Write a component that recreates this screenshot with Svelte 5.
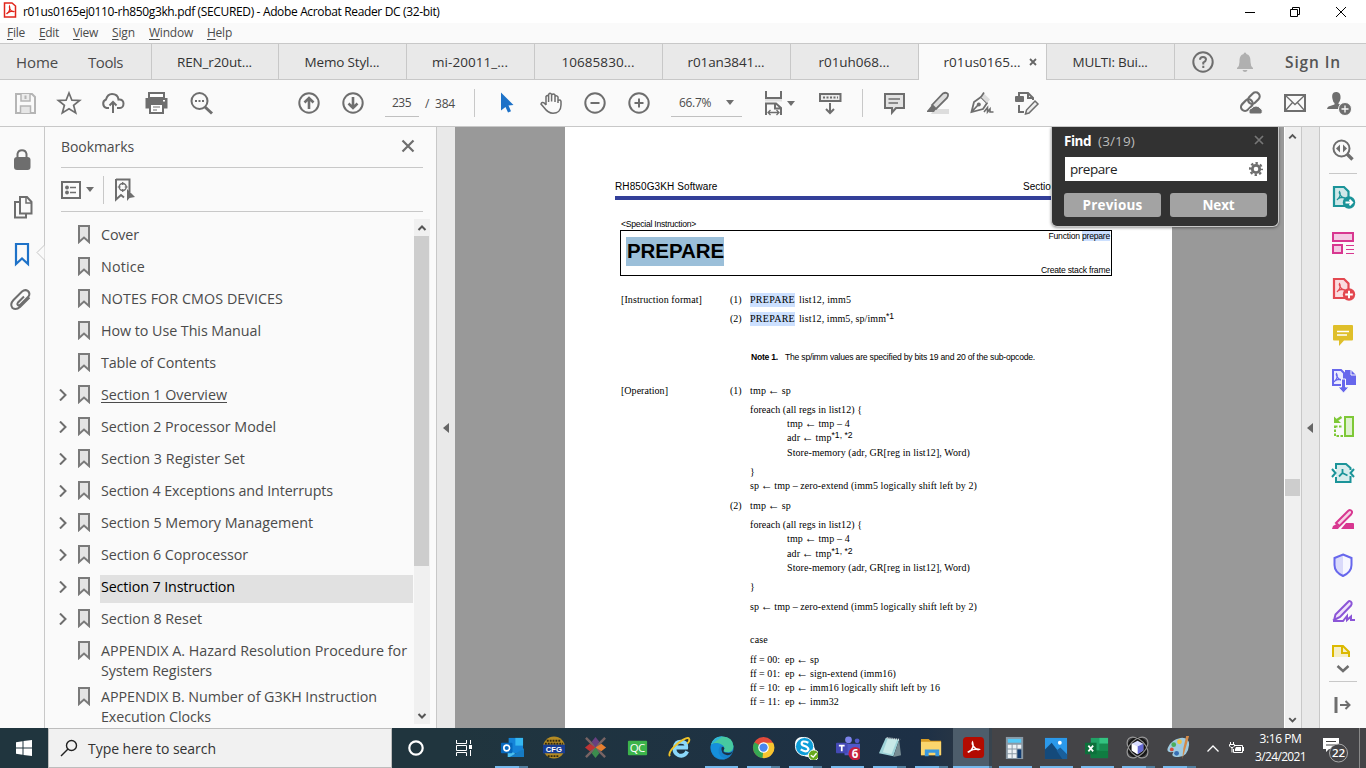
<script>
  // Adjusts letter spacing so a label fills its designed width.
  function fit(node, width) {
    const n = [...node.textContent].length;
    const natural = node.getBoundingClientRect().width;
    if (n > 0 && natural > 0) node.style.letterSpacing = (width - natural) / n + 'px';
  }

  const g = 'fill="none" stroke="#6e6e6e" stroke-width="2"';
  const g1 = 'fill="none" stroke="#6e6e6e"';
  const acro = (c) => `<path d="M8 16C12 13 11.500 9 10.500 7.500C9.500 9 13 15 16 14C14 12.500 9 14 8 16" fill="none" stroke="${c}" stroke-width="1.200"/>`;

  const icons = {
    save: '<path d="M3 3H19L22 6V22H3Z" fill="none" stroke="#b5b5b5" stroke-width="2"/><path d="M8 3V10H17V3" fill="#ececec" stroke="#b5b5b5" stroke-width="1.500"/><path d="M12.500 4.500V8" stroke="#b5b5b5" stroke-width="2"/><path d="M7.500 22V15H17.500V22" fill="#e6e6e6" stroke="#b5b5b5" stroke-width="1.500"/>',
    star: `<path d="M12 2L14.900 9.200L22.600 9.500L16.600 14.300L18.700 21.900L12 17.700L5.300 21.900L7.400 14.300L1.400 9.500L9.100 9.200Z" ${g1} stroke-width="1.700"/>`,
    cloud: `<path d="M8 17H5.500A4.500 4.500 0 0 1 5 8.500C6 5 8 3 11 3C14.500 3 17 5 17.500 8.500C21 8 22.500 10.500 22.500 12.500C22.500 15 21 17 19 17H16" ${g}/><path d="M12 22V11M8.500 14.500L12 11L15.500 14.500" ${g}/>`,
    print: '<g transform="translate(-1 -1)"><path d="M5 3H20V8H5Z" fill="#fff" stroke="#6e6e6e" stroke-width="2"/><path d="M1.500 8H23.500V18.500H1.500Z" fill="#6e6e6e"/><path d="M6 14H19V23H6Z" fill="#fff" stroke="#6e6e6e" stroke-width="2"/><path d="M9 17H16M9 20H13" stroke="#6e6e6e" stroke-width="1.200"/><rect x="19" y="10" width="2" height="1.500" fill="#fff"/></g>',
    searchdots: `<circle cx="10.500" cy="10" r="8" ${g}/><path d="M16 16L23 22.500" stroke="#6e6e6e" stroke-width="3"/><path d="M6 10H8M9.500 10H11.500M13 10H15" stroke="#6e6e6e" stroke-width="2"/>`,
    up: `<circle cx="12" cy="12" r="9.700" ${g}/><path d="M12 18V7M7.500 11.500L12 7L16.500 11.500" ${g1} stroke-width="2.600"/>`,
    down: `<circle cx="12" cy="12" r="9.700" ${g}/><path d="M12 6V17M7.500 12.500L12 17L16.500 12.500" ${g1} stroke-width="2.600"/>`,
    pointer: '<path d="M6 1.500V19.500L10.500 16L13 21.500L16 20.300L13.500 14.500L18.500 14Z" fill="#1e72c8"/>',
    hand: `<path d="M7 14V5.500Q8.500 3.500 9.600 5.500V11M9.600 10V3.500Q11.200 1.200 12.600 3.500V10.500M12.600 4Q14.500 2 16 4V11M16 5.500Q18 4 19 6V12M19 9.500Q21.500 8 22 10.500V14C22 19.500 18.500 22.200 14 22.200C9.500 22.200 7.500 20 5 16.500L2 13Q3 10.500 5.500 12.200L7 14" ${g1} stroke-width="1.500"/>`,
    minus: `<circle cx="12" cy="12" r="9.700" ${g}/><path d="M7.500 12H16.500" ${g}/>`,
    plus: `<circle cx="12" cy="12" r="9.700" ${g}/><path d="M7.500 12H16.500M12 7.500V16.500" ${g}/>`,
    fitw: `<rect x="3" y="8" width="17" height="2.500" fill="#e1e1e1"/><path d="M4 0V7H19V0M4 24V12.500H14L19 17V24M13 12.500V17.500H19" ${g}/><path d="M6 21.500H17M8.500 19L6 21.500L8.500 24M14.500 19L17 21.500L14.500 24" ${g1} stroke-width="1.300"/>`,
    keys: `<rect x="2" y="3" width="20.500" height="7" fill="#ececec" stroke="#6e6e6e" stroke-width="2"/><path d="M5 6.500H20" stroke="#6e6e6e" stroke-width="2" stroke-dasharray="2 1.500"/><path d="M12 12V22M8 18L12 22L16 18" ${g}/>`,
    comment: '<path d="M3 3H22V17H14L10 21.500V17H3Z" fill="#e3e3e3" stroke="#6e6e6e" stroke-width="2"/><path d="M6.500 8H18M6.500 12H16" stroke="#6e6e6e" stroke-width="1.300"/>',
    marker: '<path d="M8 18H23V23H5Z" fill="#ddd"/><path d="M6 14L17 2.500Q20 .800 22 3Q22.500 5 21 7L10 18Z" fill="#ddd" stroke="#6e6e6e" stroke-width="1.800"/><path d="M6 14L10 18L8 21H1V20Z" fill="#6e6e6e"/>',
    pen: `<path d="M1.500 21L4 11L11 6L17 12L13 18L1.500 21ZM1.500 21L8.500 13.500" ${g1} stroke-width="1.800"/><path d="M11 6L13.500 2L20 8.500L17 12" fill="#ddd"/><path d="M11 6L14 1.500" stroke="#6e6e6e" stroke-width="1.700"/><circle cx="8.800" cy="13.500" r="2" fill="#6e6e6e"/><path d="M14 21L17.500 16.500V21L20 18V21H23.500" ${g1} stroke-width="1.600"/>`,
    docedit: `<path d="M5 6V2H14L19 7V9M14 2V7H19M5 14V21H10" ${g}/><rect x="1" y="5" width="9" height="6" rx="1" fill="#6e6e6e"/><path d="M21 10L24 13L15 22L11.500 23L12.500 19Z" fill="#eee" stroke="#6e6e6e" stroke-width="1.500"/>`,
    link: `<g transform="rotate(-45 11 11)" ${g1} stroke-width="2.200"><rect x="0" y="7" width="13" height="8" rx="4"/><rect x="10" y="7" width="13" height="8" rx="4"/></g><path d="M11 23A3.500 3.500 0 0 1 13 17A5 5 0 0 1 21 17A3.500 3.500 0 0 1 22 23Z" fill="#6e6e6e" stroke="#fafafa"/>`,
    mail: `<rect x="2" y="4" width="20" height="16" ${g}/><path d="M2.500 4.500L12 13.500L21.500 4.500M2.500 19.500L9.500 11.500M21.500 19.500L14.500 11.500" ${g1} stroke-width="1.300"/>`,
    person: '<path d="M9 1C5.500 1 4.700 4 5.500 8Q6 11 7.500 12V13.500L1.500 15.500Q0 16.500 0 18H16L14 14L11.500 13V12Q13 10.500 13.500 7.500C14 3 12 1 9 1Z" fill="#6e6e6e"/><circle cx="18" cy="18" r="6.500" fill="#6e6e6e" stroke="#fafafa"/><path d="M14.500 18H21.500M18 14.500V21.500" stroke="#fafafa" stroke-width="1.300"/>',
    help: `<circle cx="12" cy="12" r="9.700" ${g}/><path d="M9 9.800Q9 7 12 7Q15 7 15 9.500Q15 11 12.300 12.500V14.500M12.300 15.800V18" ${g}/>`,
    bell: '<path d="M12 2.500C13 2.500 13.300 3.500 13.300 4C17 5 17.500 8 17.500 12Q17.500 16 20 18V19H4V18Q6.500 16 6.500 12C6.500 8 7 5 10.700 4C10.700 3.500 11 2.500 12 2.500ZM9.500 20H14.500Q14 22 12 22Q10 22 9.500 20Z" fill="#b0b0b0"/>',
    lock: `<path d="M7.500 11V6A4.600 4.600 0 0 1 16.500 6V11" ${g}/><rect x="4" y="9" width="16.500" height="13" rx="3" fill="#6e6e6e"/>`,
    pages: `<path d="M5 7V22.500H16V19" ${g}/><path d="M10 2H17L21.500 7V18.500H10Z" fill="#fafafa" stroke="#6e6e6e" stroke-width="2"/><path d="M16 2V8H21.500" ${g1} stroke-width="1.500"/><path d="M4 7H9" ${g}/>`,
    mark: '<path d="M6 2H18V22L12 16.500L6 22Z" fill="none" stroke="#1e72c8" stroke-width="2.200"/>',
    clip: `<path d="M15 8.500L9 14.500Q7.500 16.500 9.500 17.500Q10.500 17.500 11.500 16.500L19.500 8.500Q21.500 5.500 19 3Q16 1 13 3.500L4.500 12Q.500 16.500 3.500 20Q7 22.500 11 19L20.500 9.500" ${g} transform="translate(-1 -1)"/>`,
    rsearch: `<circle cx="10.500" cy="10.500" r="8" ${g}/><path d="M16 16L21.500 21.500" stroke="#6e6e6e" stroke-width="3.400"/><path d="M9 6.500V14.500L5 10.500ZM12 6.500V14.500L16 10.500Z" fill="#6e6e6e"/>`,
    exp: `<path d="M3 2H13L17.500 6.500V21H3Z" fill="#cfe8e9" stroke="#1b9499" stroke-width="2.200"/>${acro('#1b9499').replace('<path', '<path transform="translate(-2 -1)"')}<circle cx="18" cy="17.500" r="6.200" fill="#1b9499"/><path d="M14.500 17.500H21M18.500 14.700L21.300 17.500L18.500 20.300" fill="none" stroke="#fff" stroke-width="1.800"/>`,
    org: '<g fill="#f4cbe4" stroke="#d83790" stroke-width="2"><rect x="2" y="2" width="20" height="8"/><rect x="2" y="14" width="9" height="8"/></g><path d="M15 14.500H23M15 18.500H23M15 22.500H23" stroke="#d83790" stroke-width="1"/>',
    create: `<path d="M3 2H13L17.500 6.500V21H3Z" fill="#fbdcdf" stroke="#e34850" stroke-width="2.200"/>${acro('#e34850').replace('<path', '<path transform="translate(-2 -1)"')}<circle cx="18" cy="17.500" r="6.200" fill="#e34850"/><path d="M14.200 17.500H21.800M18 13.700V21.300" stroke="#fff" stroke-width="2"/>`,
    note: '<path d="M3 2H21Q22 2 22 3V16.500Q22 17.500 21 17.500H13L8 23V17.500H3Q2 17.500 2 16.500V3Q2 2 3 2Z" fill="#dfbf2a"/><path d="M6 8.500H18M6 12H16" stroke="#fff" stroke-width="1.500"/>',
    combine: `<path d="M14 1H20L25 6V16H14Z" fill="#6767ec"/><path d="M20 1V6H25" stroke="#fafafa" fill="none"/><path d="M11 16H2V1H10L13 4V12" fill="#ececff" stroke="#6767ec" stroke-width="2"/>${acro('#6767ec').replace('<path', '<path transform="translate(-5 -3)"')}<path d="M10.500 10H14.500V18H18L12.500 24L7 18H10.500Z" fill="#6767ec" stroke="#fafafa" stroke-width="1"/>`,
    compare: '<rect x="14" y="2" width="8" height="19" fill="#dff2cf" stroke="#7ec837" stroke-width="2"/><path d="M4 10.500V21H12M4 11.500H11.500" fill="none" stroke="#7ec837" stroke-width="2" stroke-dasharray="2.500 1.500"/><path d="M10.500 2L6 5" stroke="#7ec837" stroke-width="2.500"/><path d="M3 1.500V8H10Z" fill="#7ec837"/>',
    compress: `<path d="M5 3H15L19.500 7V21H5Z" fill="#d9eded"/><path d="M5 8V3H15L19.500 7V9M5 16V21H19.500V15M1 8L4.500 12L1 16M23 8L19.500 12L23 16" fill="none" stroke="#1b9499" stroke-width="2"/><path d="M11.500 8V12L8 15.500M11.500 12L16.500 14.500" fill="none" stroke="#1b9499" stroke-width="1.800"/>`,
    redact: '<path d="M10 22L15 16H22Q23 16 23 17V22ZM1 22L2 19L5.500 17L8.500 20L7 22Z" fill="#d83790"/><path d="M5 16L17 4Q19.500 2 21 4.500Q21.500 6 20 7.500L8.500 19Z" fill="#f6d3e6" stroke="#d83790" stroke-width="2"/>',
    shield: '<path d="M12 1.500L20.500 5V12Q20.500 19 12 23Q3.500 19 3.500 12V5Z" fill="#f7f7ff"/><path d="M12 2V22.500Q3.500 19 3.500 12V5Z" fill="#dadafa"/><path d="M12 1.500L20.500 5V12Q20.500 19 12 23Q3.500 19 3.500 12V5Z" fill="none" stroke="#6767ec" stroke-width="2"/>',
    sign: '<path d="M3 21.500L4.500 15.500L17 3Q19 1 20.500 3.500Q21 5 20 6.500L9 18L2 21.500" fill="#f0e2fb" stroke="#8b55d7" stroke-width="2"/><path d="M2 22H12L16 17V21L20 17.500V21H24" fill="none" stroke="#8b55d7" stroke-width="2"/>',
    more: '<path d="M2 14V2H12L18 8V14" fill="#f6efc5" stroke="#dcb900" stroke-width="2"/><path d="M11 2V9H18" fill="none" stroke="#dcb900" stroke-width="2"/>',
    open: `<path d="M5 4V20" stroke="#6e6e6e" stroke-width="3"/><path d="M9 12H18M14.500 8L18.500 12L14.500 16" ${g}/>`
  };

  const tabs = [['REN_r20ut...', 75], ['Memo Styl...', 75], ['mi-20011_...', 76], ['10685830...', 73], ['r01an3841...', 77], ['r01uh068...', 71], ['r01us0165...', 77], ['MULTI: Bui...', 75]];
  const menus = [['File', 18], ['Edit', 20], ['View', 25], ['Sign', 23], ['Window', 44], ['Help', 25]];
  const bookmarks = [
    { t: 'Cover', w: 38 }, { t: 'Notice', w: 44 }, { t: 'NOTES FOR CMOS DEVICES', w: 182 },
    { t: 'How to Use This Manual', w: 160 }, { t: 'Table of Contents', w: 115 },
    { t: 'Section 1 Overview', w: 126, c: 1, u: 1 }, { t: 'Section 2 Processor Model', w: 175, c: 1 },
    { t: 'Section 3 Register Set', w: 144, c: 1 }, { t: 'Section 4 Exceptions and Interrupts', w: 232, c: 1 },
    { t: 'Section 5 Memory Management', w: 212, c: 1 }, { t: 'Section 6 Coprocessor', w: 147, c: 1 },
    { t: 'Section 7 Instruction', w: 134, c: 1, sel: 1 }, { t: 'Section 8 Reset', w: 101, c: 1 },
    { t: 'APPENDIX A. Hazard Resolution Procedure for', w: 306, t2: 'System Registers', w2: 111 },
    { t: 'APPENDIX B. Number of G3KH Instruction', w: 276, t2: 'Execution Clocks', w2: 110 }
  ];
  // gap: space above the line, n: item number, i: indented
  const lines = [
    { gap: 22, s: '[Operation]', sw: 47, n: '(1)', t: 'tmp ← sp', w: 41 },
    { gap: 5, t: 'foreach (all regs in list12) {', w: 112 },
    { gap: 0, i: 1, t: 'tmp ← tmp – 4', w: 63 },
    { gap: 0, i: 1, t: 'adr ← tmp', w: 44.5, sup: '*1, *2' },
    { gap: 1, i: 1, t: 'Store-memory (adr, GR[reg in list12], Word)', w: 183 },
    { gap: 5, t: '}', w: 5 },
    { gap: 0, t: 'sp ← tmp – zero-extend (imm5 logically shift left by 2)', w: 227 },
    { gap: 6, n: '(2)', t: 'tmp ← sp', w: 41 },
    { gap: 5, t: 'foreach (all regs in list12) {', w: 112 },
    { gap: 0, i: 1, t: 'tmp ← tmp – 4', w: 63 },
    { gap: 1, i: 1, t: 'adr ← tmp', w: 44.5, sup: '*1, *2' },
    { gap: 0, i: 1, t: 'Store-memory (adr, GR[reg in list12], Word)', w: 183 },
    { gap: 5, t: '}', w: 5 },
    { gap: 6, t: 'sp ← tmp – zero-extend (imm5 logically shift left by 2)', w: 227 },
    { gap: 19, t: 'case', w: 18 },
    { gap: 6, f: 'ff = 00:', t: 'ep ← sp', w: 34 },
    { gap: 0, f: 'ff = 01:', t: 'ep ← sign-extend (imm16)', w: 111 },
    { gap: 0, f: 'ff = 10:', t: 'ep ← imm16 logically shift left by 16', w: 155 },
    { gap: 0, f: 'ff = 11:', t: 'ep ← imm32', w: 54 }
  ];
  const rail = ['exp', 'org', 'create', 'note', 'combine', 'compare', 'compress', 'redact', 'shield', 'sign'];

  const apps = [
    { r: 1, stack: 1, s: '<path d="M9 2H24V18H9Z" fill="#1584d8"/><path d="M16 2H24V10H16Z" fill="#35b8f1"/><path d="M8 14L17 19L25 13V22H8Z" fill="#4bc0ef"/><path d="M10 22L25 13V22Z" fill="#167bc3"/><rect x="1" y="7" width="12" height="11" rx="1" fill="#0668bd"/><circle cx="7" cy="12.500" r="3" fill="none" stroke="#fff" stroke-width="1.700"/>' },
    { s: '<circle cx="12.500" cy="12" r="11.500" fill="#b48b24"/><path d="M5 5H20M3 8H22M6 21H18" stroke="#30280d" stroke-width="2" stroke-dasharray="2 1"/><path d="M1 9H24V18H1Z" fill="#173d94"/><text x="4" y="16.500" font-size="8" font-family="Liberation Sans" font-weight="bold" fill="#fff">CFG</text>' },
    { s: '<path d="M2 2L22 22M22 2L2 22" stroke="#786464" stroke-width="2.500"/><path d="M12 12L8 6L12 1L16 6Z" fill="#674080"/><path d="M12 12L18 8L23 12L18 16Z" fill="#e67e30"/><path d="M12 12L16 18L12 23L8 18Z" fill="#3b8c4d"/><path d="M12 12L6 16L1 12L6 8Z" fill="#bd3435"/>' },
    { s: '<rect x="2" y="5" width="20" height="15" rx="1" fill="#3cb44b"/><text x="4" y="17" font-size="12" textLength="16" font-family="Open Sans" fill="#fff">QC</text>' },
    { s: '<path d="M20 16Q17 22 11 20Q6 18 7 12Q8 6 13 6Q20 6 19 12H8" fill="none" stroke="#8ad8fa" stroke-width="4"/><path d="M2 21Q-1 17 11 7Q21 0 22 3Q23 5 20 8" fill="none" stroke="#efc329" stroke-width="2"/>' },
    { r: 1, s: '<circle cx="12.500" cy="12.500" r="12" fill="#1683ce"/><path d="M1 9Q4 0 13 .500Q24 1 24.500 11Q24 17 18 17Q13 17 15 13Q15 9 9 8Q4 7 1 9Z" fill="#47c9a0"/><path d="M1 9Q4 0 13 .500Q8 4 1 9Z" fill="#2fb4d8"/><path d="M1 9Q0 15 4 20Q9 25 16 24Q8 21 9 14Q10 9 13 10Q9 5 1 9Z" fill="#1590dc"/><path d="M15 13Q12 17.500 18 17.500Q22 18 24 15.500Q22 20 18 20Q11 19 12 12Q14 10 15 13Z" fill="#1c3148"/>' },
    { r: 1, stack: 1, s: '<circle cx="12" cy="12" r="11" fill="#e24a3b"/><path d="M12 12L2.500 6.500A11 11 0 0 0 12 23Z" fill="#36a853"/><path d="M12 12V7H22A11 11 0 0 1 11 23Z" fill="#f7c52f"/><circle cx="12" cy="12" r="5.500" fill="#fff"/><circle cx="12" cy="12" r="4.300" fill="#4a87ee"/>' },
    { r: 1, stack: 1, s: '<circle cx="8" cy="8" r="7" fill="#fff"/><circle cx="15" cy="15" r="7" fill="#fff"/><circle cx="11" cy="11" r="9.500" fill="#0e9ed9" stroke="#fff"/><path d="M15 7Q8 4 8 8C8 11 15 10 15 14Q13 18 7 14" fill="none" stroke="#fff" stroke-width="2.300"/><circle cx="20.500" cy="20" r="5.500" fill="#68a91d" stroke="#fff"/><path d="M17.500 20L20 22L23.500 18" fill="none" stroke="#fff" stroke-width="1.500"/>' },
    { r: 1, s: '<circle cx="13" cy="4" r="3.500" fill="#7b83eb"/><circle cx="22" cy="5" r="2.500" fill="#5059c9"/><path d="M8 8H25V15Q24 20 18 20H9Z" fill="#5059c9"/><rect x="0" y="7" width="12" height="11" rx="1" fill="#4449b6"/><path d="M3 10H9M6 10V16" stroke="#fff" stroke-width="1.800"/><circle cx="20" cy="18.500" r="7" fill="#c4213e"/><text x="16.500" y="23" font-size="12" font-family="Open Sans" font-weight="bold" fill="#fff">6</text>' },
    { r: 1, stack: 1, s: '<path d="M8 2L22 4L16 21L1 18Z" fill="#9ed3d8"/><path d="M10 3L20 4L14 19L5 17Z" fill="#c7e9e8"/><path d="M22 4L24 20L16 22Z" fill="#778c93"/><path d="M9 2L23 4" stroke="#dce5e5" stroke-width="2" stroke-dasharray="1 1"/>' },
    { r: 1, stack: 1, s: '<path d="M1 3H9L11 5H22V20H1Z" fill="#d99c23"/><path d="M1 6H22V20H1Z" fill="#fbd66d"/><path d="M5 21V14H20V21H16V17.500H9V21Z" fill="#3998df"/>' },
    { r: 1, act: 1, stack: 1, s: '<rect x="1" y="1" width="22" height="22" rx="4" fill="#b30b00"/><path d="M6 17C12 15 12 9 11 6.500C9.500 9 15 15.500 18 14C15 12.500 8 15 6 17" fill="none" stroke="#fff" stroke-width="1.500"/>' },
    { r: 1, s: '<path d="M3 1H21V24H3Z" fill="#8a99a5"/><path d="M5 3H19V7H5Z" fill="#55c9f6"/><g fill="#edf2f5"><path d="M5 9H9V13H5ZM10 9H14V13H10ZM15 9H19V13H15ZM5 14H9V18H5ZM10 14H14V18H10ZM5 19H9V23H5ZM10 19H14V23H10Z"/></g><path d="M15 14H19V23H15Z" fill="#123c70"/>' },
    { r: 1, s: '<path d="M1 2H24V24H1Z" fill="#2b99ea"/><path d="M1 14L8 7L21 24H1Z" fill="#144a7b"/><path d="M13 15L17 12L24 19V24H19Z" fill="#1a5f9b"/><circle cx="16.500" cy="7" r="2" fill="#fff"/>' },
    { r: 1, s: '<path d="M6 2H24V23H6Z" fill="#21a366"/><path d="M15 2H24V8H15Z" fill="#33c481"/><path d="M6 15H24V23H6Z" fill="#107c41"/><path d="M15 8H24V15H15Z" fill="#178c50"/><rect x="0" y="7" width="12" height="12" fill="#0d703b"/><path d="M3.500 10L8.500 16M8.500 10L3.500 16" stroke="#fff" stroke-width="1.800"/>' },
    { r: 1, stack: 1, s: '<circle cx="12" cy="12" r="11" fill="#171717"/><g fill="none" stroke="#999" stroke-width="1.200"><ellipse cx="12" cy="12" rx="13" ry="8" transform="rotate(45 12 12)"/><ellipse cx="12" cy="12" rx="13" ry="8" transform="rotate(-45 12 12)"/></g><path d="M12 5L18 8V15L12 19L6 15V8Z" fill="#d9dcff"/><path d="M12 11L18 8V15L12 19Z" fill="#6568d4"/><path d="M12 11L6 8V15L12 19Z" fill="#fff"/>' },
    { r: 1, stack: 1, s: '<path d="M14 2Q23 1 23 9Q22 21 12 22Q4 22 6 18Q8 16 4 17Q-1 17 1 12Q4 4 14 2Z" fill="#9fcbe1"/><circle cx="7" cy="9" r="2.500" fill="#4cae5b"/><circle cx="5" cy="14" r="2" fill="#d84d3d"/><circle cx="13" cy="6" r="2.500" fill="#efc343"/><circle cx="10" cy="18" r="2.500" fill="#376eb3"/><path d="M23 0L19 14L16 24L17 13L20 0Z" fill="#d38a48"/>' }
  ];
</script>

{#snippet icon(name)}
  <svg class="ic" viewBox="0 0 24 24">{@html icons[name]}</svg>
{/snippet}

<div class="app">
  <header class="title">
    <svg width="14" height="16" viewBox="0 0 14 16"><path d="M1.500 1H9L12.500 4V15H1.500Z" fill="#fff" stroke="#e1251b" stroke-width="1.500" /><path d="M3.500 12C7 10 7 6 6.500 4.500C6 6 8 10 10.500 9.500C9 8.500 5 10 3.500 12" fill="none" stroke="#e1251b" stroke-width="1.300" /></svg>
    <span class="cap"><span use:fit={416.5}>r01us0165ej0110-rh850g3kh.pdf (SECURED) - Adobe Acrobat Reader DC (32-bit)</span></span>
    <svg class="win" width="110" height="14" viewBox="0 0 110 14" fill="none" stroke="#000"><path d="M1 7.500H11M46.500 4.500H53.500V11.500H46.500ZM48.500 4V2.500H55.500V9.500H54M92 2L102 12M102 2L92 12" /></svg>
  </header>
  <nav class="menu">
    {#each menus as [m, w]}<span class="mi" style:width="{w}px"><span use:fit={w}><u>{m[0]}</u>{m.slice(1)}</span></span>{/each}
  </nav>
  <div class="tabs">
    <div class="home"><span use:fit={42}>Home</span><span use:fit={35}>Tools</span></div>
    {#each tabs as [t, w], k}
      <div class="tab" class:first={k === 0} class:on={k === 6}><span use:fit={w}>{t}</span>
        {#if k === 6}<svg class="tx" width="8" height="8" viewBox="0 0 8 8"><path d="M1 1L7 7M7 1L1 7" stroke="#666" stroke-width="1.800" /></svg>{/if}
      </div>
    {/each}
    <div class="acct">{@render icon('help')}{@render icon('bell')}<b use:fit={56}>Sign In</b></div>
  </div>
  <div class="tools">
    <div class="grp g1">{#each ['save', 'star', 'cloud', 'print', 'searchdots'] as n}{@render icon(n)}{/each}</div>
    <div class="grp g2">{@render icon('up')}{@render icon('down')}</div>
    <div class="box pg"><span use:fit={19}>235</span></div>
    <div class="of"><span use:fit={30}>/&nbsp; 384</span></div>
    <i class="sep s1"></i>
    <div class="grp g3">{#each ['pointer', 'hand', 'minus', 'plus'] as n}{@render icon(n)}{/each}</div>
    <div class="box zm"><span use:fit={32}>66.7%</span><i class="tri"></i></div>
    <div class="grp g4">{@render icon('fitw')}<i class="tri"></i></div>
    <div class="grp g5">{@render icon('keys')}</div>
    <i class="sep s2"></i>
    <div class="grp g6">{#each ['comment', 'marker', 'pen', 'docedit'] as n}{@render icon(n)}{/each}</div>
    <div class="grp g7">{#each ['link', 'mail', 'person'] as n}{@render icon(n)}{/each}</div>
  </div>

  <main>
    <aside class="left">
      {#each ['lock', 'pages', 'mark', 'clip'] as n}{@render icon(n)}{/each}
      <svg class="notch" width="9" height="15" viewBox="0 0 9 15"><path d="M8.500 0L1 7.500L8.500 15" fill="#fafafa" stroke="#c6c6c6" /></svg>
    </aside>
    <section class="panel">
      <div class="ph"><span use:fit={73}>Bookmarks</span><svg width="14" height="14" viewBox="0 0 14 14"><path d="M1.500 1.500L12.500 12.500M12.500 1.500L1.500 12.500" stroke="#6e6e6e" stroke-width="2.200" /></svg></div>
      <div class="pt">
        <svg width="20" height="18" viewBox="0 0 20 18"><path d="M1 1H19V17H1Z" fill="none" stroke="#6e6e6e" stroke-width="2" /><path d="M9 6.500H15M9 11.500H15" stroke="#6e6e6e" stroke-width="1.700" /><circle cx="6" cy="6.500" r="1.900" fill="#6e6e6e" /><circle cx="6" cy="11.500" r="1.900" fill="#6e6e6e" /></svg>
        <i class="tri"></i><i class="sep"></i>
        <svg width="22" height="24" viewBox="0 0 22 24"><path d="M2 1.500H15.500V14M2 1V21.500L7 17L10 19.500" fill="none" stroke="#6e6e6e" stroke-width="2" /><circle cx="8.700" cy="9" r="3.500" fill="none" stroke="#6e6e6e" stroke-width="1.400" /><path d="M8.700 4V7M8.700 11V14M3.700 9H6.700M10.700 9H13.700" stroke="#6e6e6e" stroke-width="1.200" /><path d="M13 11V23L15.500 20L21 19Z" fill="#6e6e6e" /></svg>
      </div>
      <div class="pl">
        <div class="list">
          {#each bookmarks as b}
            <div class="bm" class:two={b.t2}>
              <svg class="chev" width="10" height="12" viewBox="0 0 10 12">{#if b.c}<path d="M2 .500L7.500 6L2 11.500" fill="none" stroke="#6e6e6e" stroke-width="2" />{/if}</svg>
              <svg class="bi" width="12" height="19" viewBox="0 0 12 19"><path d="M1 1H11V17L6 12.500L1 17Z" fill="#e4e4e4" stroke="#7a7a7a" stroke-width="2" /></svg>
              <div class="bt" class:sel={b.sel} class:un={b.u}><span use:fit={b.w}>{b.t}</span>{#if b.t2}<br /><span use:fit={b.w2}>{b.t2}</span>{/if}</div>
            </div>
          {/each}
        </div>
        <div class="sb sl">
          <svg width="16" height="17" viewBox="0 0 16 17"><path d="M4.500 11L8 7.500L11.500 11" fill="none" stroke="#555" stroke-width="2" /></svg>
          <i></i>
          <svg class="end" width="16" height="17" viewBox="0 0 16 17"><path d="M4.500 7L8 10.500L11.500 7" fill="none" stroke="#555" stroke-width="2" /></svg>
        </div>
      </div>
    </section>
    <div class="strip"><i></i></div>
    <div class="canvas">
      <article class="page">
        <div class="rh"><span use:fit={102.5}>RH850G3KH Software</span><span class="sec">Section 7 Instruction</span></div>
        <div class="si"><span use:fit={75}>&lt;Special Instruction&gt;</span></div>
        <div class="frame">
          <h1><span use:fit={97}>PREPARE</span></h1>
          <div class="fr"><span><span use:fit={33.5}>Function&nbsp;</span><mark use:fit={28}>prepare</mark></span><span use:fit={69}>Create stack frame</span></div>
        </div>
        <div class="ln f1"><span class="side"><span use:fit={81}>[Instruction format]</span></span><span class="no">(1)</span><mark use:fit={45}>PREPARE</mark><span class="arg"><span use:fit={52}>list12, imm5</span></span></div>
        <div class="ln f2"><span class="side"></span><span class="no">(2)</span><mark use:fit={45}>PREPARE</mark><span class="arg"><span use:fit={87}>list12, imm5, sp/imm</span></span><sup>*1</sup></div>
        <div class="nt"><b use:fit={27}>Note 1.</b><span use:fit={250}>The sp/imm values are specified by bits 19 and 20 of the sub-opcode.</span></div>
        {#each lines as l}
          <div class="ln" style:margin-top="{l.gap}px">
            <span class="side">{#if l.s}<span use:fit={l.sw}>{l.s}</span>{/if}</span><span class="no">{l.n ?? ''}</span>{#if l.i}<span class="ind"></span>{/if}{#if l.f}<span class="ff"><span use:fit={30}>{l.f}</span></span>{/if}<span use:fit={l.w}>{#each l.t.split('←') as p, k}{#if k}<em>←</em>{/if}{p}{/each}</span>{#if l.sup}<sup>{l.sup}</sup>{/if}
          </div>
        {/each}
      </article>
      <div class="find">
        <div class="fh"><span><b use:fit={27}>Find</b><span class="cnt" use:fit={37}>(3/19)</span></span><svg width="10" height="10" viewBox="0 0 10 10"><path d="M1 1L9 9M9 1L1 9" stroke="#777" stroke-width="1.700" /></svg></div>
        <div class="fi"><span use:fit={47}>prepare</span><svg width="14" height="14" viewBox="0 0 14 14"><circle cx="7" cy="7" r="3.700" fill="none" stroke="#6e6e6e" stroke-width="2.800" /><circle cx="7" cy="7" r="5.900" fill="none" stroke="#6e6e6e" stroke-width="2.200" stroke-dasharray="2.400 2.230" stroke-dashoffset="1.200" /></svg></div>
        <div class="fb"><b><span use:fit={60}>Previous</span></b><b><span use:fit={32}>Next</span></b></div>
      </div>
    </div>
    <div class="sb sr">
      <svg width="15" height="17" viewBox="0 0 16 17"><path d="M4.500 11.500L8 8L11.500 11.500" fill="none" stroke="#555" stroke-width="2" /></svg>
      <i></i>
      <svg class="end" width="15" height="17" viewBox="0 0 16 17"><path d="M4.500 7L8 10.500L11.500 7" fill="none" stroke="#555" stroke-width="2" /></svg>
    </div>
    <div class="strip r"><i></i></div>
    <aside class="right">
      {@render icon('rsearch')}<hr />
      <div class="rl">{#each rail as n}{@render icon(n)}{/each}</div>
      <svg class="half" width="24" height="13" viewBox="0 0 24 13">{@html icons.more}</svg>
      <svg class="dn" width="14" height="8" viewBox="0 0 14 8"><path d="M1.500 1L7 6L12.500 1" fill="none" stroke="#6e6e6e" stroke-width="2.500" /></svg>
      <hr />{@render icon('open')}
    </aside>
  </main>

  <footer>
    <div class="start"><svg width="16" height="16" viewBox="0 0 16 16"><path d="M0 2.300L6.500 1.300V7.500H0ZM7.500 1.100L16 0V7.500H7.500ZM0 8.500H6.500V14.700L0 13.700ZM7.500 8.500H16V16L7.500 14.900Z" fill="#fff" /></svg></div>
    <div class="search"><svg width="18" height="18" viewBox="0 0 18 18"><circle cx="11.500" cy="6.500" r="5" fill="none" stroke="#222" stroke-width="1.400" /><path d="M8 10L1 17" stroke="#222" stroke-width="1.400" /></svg><span use:fit={128}>Type here to search</span></div>
    <div class="cort"><svg width="16" height="16" viewBox="0 0 16 16"><circle cx="8" cy="8" r="6.700" fill="none" stroke="#fff" stroke-width="2.200" /></svg></div>
    <div class="tv"><svg width="17" height="16" viewBox="0 0 17 16" fill="none" stroke="#fff"><path d="M.500 0V3.500H10.500V0M.500 16V12.500H10.500V16M.500 5.500H10.500V10.500H.500ZM14.500 0V4M14.500 10V16" /><path d="M13 5H16V9H13Z" fill="#fff" stroke="none" /></svg></div>
    <div class="apps">
      {#each apps as a, k}<div class="app-i" class:narrow={k > 11} class:act={a.act}><svg width="24" height="24" viewBox="0 0 25 25">{@html a.s}</svg>{#if a.r}<i class:stack={a.stack}></i>{/if}</div>{/each}
    </div>
    <div class="tray">
      <svg class="t1" width="12" height="7" viewBox="0 0 12 7"><path d="M.500 6.500L6 1L11.500 6.500" fill="none" stroke="#fff" stroke-width="1.300" /></svg>
      <svg class="t2" width="16" height="12" viewBox="0 0 16 12" fill="none" stroke="#fff"><path d="M6 3.500H13.500V10.500H4.500V7M14.500 5V9M1.500 0V2M4.500 0V2M.500 2.500H5.500V4L4 5.500H2L.500 4ZM3 6V10.500" /><path d="M7 5H12V9H6V7Z" fill="#fff" stroke="none" /></svg>
      <div class="clock"><span use:fit={42}>3:16 PM</span><span use:fit={51}>3/24/2021</span></div>
      <svg class="t3" width="28" height="26" viewBox="0 0 28 26"><path d="M1 1H17V12H7L4 15V12H1Z" fill="#fff" /><path d="M4 4.500H14M4 8H14" stroke="#444" /><circle cx="16.500" cy="16" r="9" fill="#444447" stroke="#aaa" /><text x="10" y="20" font-size="11.500" textLength="13" font-family="Open Sans" font-weight="600" fill="#fff">22</text></svg>
      <i class="edge"></i>
    </div>
  </footer>
</div>

<style>
  :global(body) { margin: 0; }
  .app { width: 1366px; height: 768px; overflow: hidden; display: flex; flex-direction: column; font-family: "Open Sans", sans-serif; color: #4b4b4b; background: #fafafa; white-space: nowrap; }
  .app * { box-sizing: border-box; }
  .app :global(span) { display: inline-block; }
  .ic { width: 24px; height: 24px; flex: none; overflow: visible; display: block; }
  svg { flex: none; display: block; }
  i { display: block; flex: none; }
  .title { height: 23px; background: #fff; display: flex; align-items: center; padding-left: 3px; color: #000; font-size: 12px; }
  .cap { width: 420px; margin-left: 6px; }
  .title > svg { margin-bottom: 3px; }
  .title .win { margin-left: auto; margin-right: 12px; margin-bottom: 0; }
  .menu { height: 20px; flex: none; padding: 0 7px; display: flex; gap: 14px; font-size: 12px; line-height: 20px; background: #fafafa; }
  u { text-underline-offset: 2px; }
  .tabs { height: 37px; flex: none; background: #e9e9e9; border-top: 1px solid #c8c8c8; border-bottom: 1px solid #c8c8c8; display: flex; font-size: 13.5px; }
  .home { width: 151px; display: flex; align-items: center; gap: 30px; padding-left: 16px; font-size: 15px; flex: none; }
  .tab { width: 128px; flex: none; border-left: 1px solid #c8c8c8; display: flex; align-items: center; justify-content: center; position: relative; height: 35px; color: #333; padding-right: 1px; }
  .tab.first { width: 127px; }
  .tab.on { background: #fafafa; height: 36px; }
  .tx { position: absolute; right: 9px; top: 14px; }
  .acct { width: 192px; border-left: 1px solid #c8c8c8; display: flex; align-items: center; padding-left: 16px; gap: 18px; font-size: 15.5px; color: #555; }
  .acct b { margin-left: 10px; font-weight: 600; }
  .tools { height: 47px; flex: none; border-bottom: 1px solid #c8c8c8; display: flex; align-items: center; font-size: 12px; }
  .grp { display: flex; gap: 20px; align-items: center; flex: none; }
  .g1 { margin-left: 13px; }
  .g2 { margin-left: 84px; }
  .box { border-bottom: 1px solid #c0c0c0; height: 27px; line-height: 26px; flex: none; }
  .pg { width: 34px; margin-left: 20px; padding-left: 7px; }
  .of { margin-left: 6px; width: 31px; }
  .sep { width: 1px; height: 28px; background: #c8c8c8; flex: none; }
  .s1 { margin-left: 18px; }
  .g3 { margin-left: 20px; }
  .zm { width: 71px; margin-left: 20px; padding: 0 8px; display: flex; justify-content: space-between; align-items: center; }
  .tri { border: 4px solid transparent; border-top: 5px solid #6e6e6e; border-bottom: 0; width: 8px; height: 5px; }
  .g4 { margin-left: 20px; gap: 1px; }
  .g5 { margin-left: 23px; }
  .s2 { margin-left: 20px; }
  .g6 { margin-left: 19px; }
  .g7 { margin-left: auto; margin-right: 15px; }
  main { height: 601px; flex: none; display: flex; overflow: hidden; }
  .left { width: 45px; border-right: 1px solid #c8c8c8; padding: 21px 0 0 10px; display: flex; flex-direction: column; gap: 23px; flex: none; position: relative; }
  .notch { position: absolute; right: -1px; top: 118px; }
  .panel { width: 391px; flex: none; display: flex; flex-direction: column; }
  .ph { height: 41px; margin: 0 13px 0 16px; border-bottom: 1px solid #c8c8c8; display: flex; align-items: center; justify-content: space-between; font-size: 14px; padding: 0 8px 2px 0; flex: none; }
  .pt { height: 44px; margin: 0 13px 0 16px; border-bottom: 1px solid #c8c8c8; display: flex; align-items: center; flex: none; }
  .pt .tri { margin-left: 5px; }
  .pt .sep { margin: 0 10px 0 9px; }
  .pl { display: flex; flex: 1; overflow: hidden; padding-top: 6px; }
  .list { width: 369px; font-size: 14.3px; line-height: 20px; flex: none; padding-top: 1px; }
  .bm { height: 32px; display: flex; padding-top: 6px; }
  .bm.two { height: 46px; }
  .chev { margin: 4px 9px 0 13px; }
  .bi { margin: 0 10px 0 1px; }
  .bt { width: 313px; padding-left: 1px; height: 26px; line-height: 20px; }
  .bt.sel { background: #e1e1e1; color: #000; height: 28px; margin-top: -2px; padding-top: 2px; }
  .bt.un span { text-decoration: underline; text-underline-offset: 2px; }
  .sb { background: #f0f0f0; display: flex; flex-direction: column; flex: none; }
  .sl { width: 16px; height: 505px; margin-top: 1px; }
  .sl i { width: 15px; height: 330px; background: #cdcdcd; }
  .end { margin-top: auto; }
  .strip { width: 19px; background: #e9e9e9; border-left: 1px solid #c8c8c8; padding: 296px 0 0 6px; flex: none; }
  .strip i { border: 5px solid transparent; border-right: 6px solid #666; border-left: 0; width: 6px; height: 10px; }
  .canvas { width: 829px; background: #999; position: relative; flex: none; padding-left: 110px; }
  .page { width: 607px; height: 601px; background: #fff; color: #000; font-family: "Liberation Serif", serif; font-size: 10px; padding: 53px 59px 0 50px; overflow: hidden; }
  .rh { font: 10px/14px "Liberation Sans", sans-serif; display: flex; border-bottom: 4px solid #333f99; height: 20px; justify-content: space-between; }
  .sec { width: 90px; }
  .si { font: 8.6px/10px "Liberation Sans", sans-serif; padding-left: 6px; margin-top: 19px; }
  .frame { border: 1px solid #000; margin: 1px 0 0 5px; width: 492px; height: 46px; display: flex; justify-content: space-between; }
  h1 { font: bold 20.5px/28px "Liberation Sans", sans-serif; background: #9bbfd9; margin: 6px 0 0 5px; height: 29px; width: 98px; padding-left: 1px; }
  .fr { font: 8.6px/10px "Liberation Sans", sans-serif; display: flex; flex-direction: column; justify-content: space-between; align-items: flex-end; padding-right: 1px; }
  mark { background: #cce0ff; color: #000; display: inline-block; }
  .ln { height: 14px; line-height: 14px; display: flex; white-space: pre; }
  .side { width: 115px; padding-left: 6px; flex: none; }
  .no { width: 20px; flex: none; }
  .ind { width: 37px; flex: none; }
  .ff { width: 35px; flex: none; }
  .f1 { margin-top: 17px; }
  .f2 { margin-top: 5px; }
  .arg { padding-left: 4px; }
  em { font-style: normal; font-weight: bold; font-size: 12px; line-height: 0; margin: 0 -1px; }
  sup { font: 8.6px/8px "Liberation Sans", sans-serif; }
  .nt { font: 8.6px/10px "Liberation Sans", sans-serif; margin: 26px 0 0 136px; display: flex; gap: 7px; height: 10px; }
  .find { position: absolute; left: 596px; top: 0; width: 228px; height: 100px; background: #323232; border: 1px solid #c8c8c8; border-top: 0; border-radius: 0 0 6px 6px; box-shadow: 0 1px 3px #0006; color: #fff; padding: 5px 11px 0 12px; font-size: 13.5px; }
  .fh { display: flex; justify-content: space-between; height: 19px; line-height: 19px; align-items: center; padding: 0 3px 0 0; }
  .fh svg { margin-bottom: 3px; }
  .cnt { color: #bbb; margin-left: 7px; }
  .fi { background: #fff; color: #222; height: 24px; margin: 6px 0 12px 1px; display: flex; align-items: center; justify-content: space-between; padding: 0 4px 0 5px; }
  .fb { display: flex; gap: 9px; }
  .fb b { height: 24px; line-height: 24px; flex: 1; text-align: center; background: #a3a3a3; border-radius: 3px; font-weight: 700; font-size: 13.5px; }
  .sr { width: 17px; border-left: 1px solid #fff; }
  .sr i { width: 15px; height: 17px; margin-top: 335px; background: #cdcdcd; }
  .strip.r { width: 18px; padding-left: 5px; }
  .right { width: 47px; border-left: 1px solid #c8c8c8; display: flex; flex-direction: column; align-items: center; padding-top: 11px; flex: none; background: #fafafa; }
  .right hr { width: 28px; border: 0; border-top: 1px solid #c8c8c8; margin: 11px 0 11px; }
  .rl { display: flex; flex-direction: column; gap: 22px; }
  .half { margin-top: 21px; }
  .dn { margin-top: 8px; }
  .right .dn + hr { margin: 8px 0 11px; }
  footer { height: 40px; flex: none; display: flex; background: linear-gradient(90deg, #20353e 0, #20353e 450px, #1d3046 920px, #253445 950px, #444447 992px); }
  .start { width: 48px; display: grid; place-items: center; flex: none; }
  .search { width: 344px; background: #f1f1f1; border: 1px solid #bdbdbd; display: flex; align-items: center; padding-left: 11px; gap: 10px; font-size: 14px; color: #333; flex: none; }
  .cort { width: 48px; display: grid; place-items: center; flex: none; }
  .tv { width: 50px; padding: 12px 0 0 16px; flex: none; }
  .apps { display: flex; width: 708px; flex: none; }
  .app-i { width: 42px; height: 40px; flex: none; display: flex; justify-content: center; padding: 8px 0 0 1px; position: relative; }
  .app-i.narrow { width: 41px; }
  .app-i.act { background: linear-gradient(90deg, transparent 1px, #4d5d6b 1px, #4d5d6b 37px, #38444e 37px, #38444e 40px, transparent 40px); }
  .app-i i { position: absolute; left: 5px; bottom: 0; height: 2px; width: 33px; background: #76b9ed; }
  .app-i i.stack { background: linear-gradient(90deg, #76b9ed 24px, #527f9f 24px); }
  .app-i.act i { left: 1px; width: 39px; background: linear-gradient(90deg, #76b9ed 36px, #527f9f 36px); }
  .tray { flex: 1; display: flex; align-items: center; color: #fff; }
  .t1 { margin-left: 9px; }
  .t2 { margin-left: 10px; }
  .clock { width: 51px; margin-left: 10px; font-size: 12px; display: flex; flex-direction: column; align-items: center; line-height: 18px; padding-bottom: 1px; }
  .t3 { margin-left: 16px; margin-top: 4px; }
  .edge { width: 1px; height: 40px; background: #888; margin-left: 9px; }
</style>
